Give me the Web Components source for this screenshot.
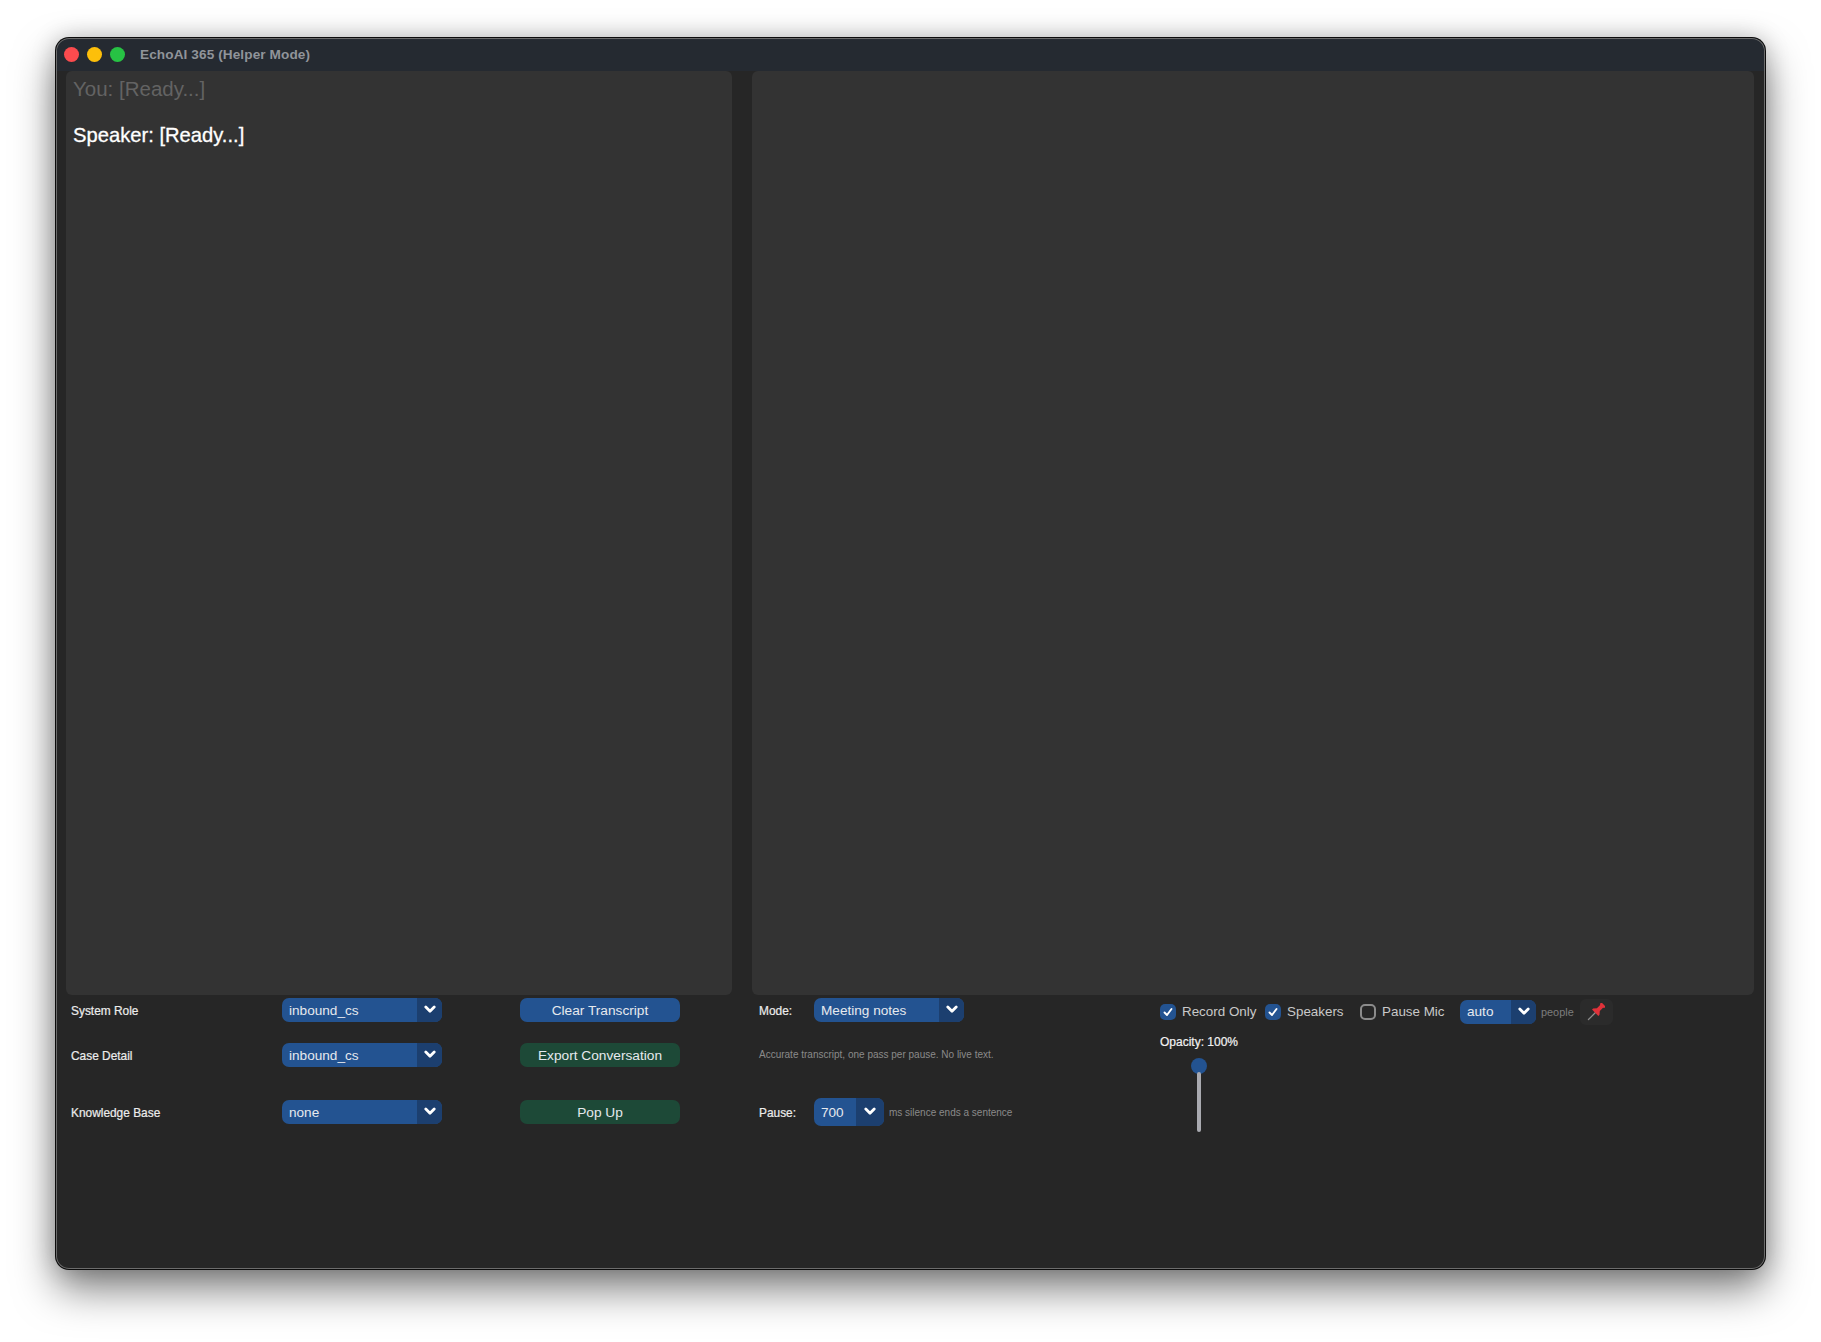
<!DOCTYPE html>
<html lang="en">
<head>
<meta charset="utf-8">
<title>EchoAI 365 (Helper Mode)</title>
<style>
    html, body { margin: 0; background: #fff; }
    body { padding: 38px 56px 73px; font-family: "Liberation Sans", Arial, sans-serif; }
</style>
</head>
<body>
<app-window>
    <title-bar slot="title">EchoAI 365 (Helper Mode)</title-bar>
    <text-panel slot="left" style="width:666px">
        <p class="you" style="margin:-1px 0 0;color:#636363;font-size:20.5px;line-height:24px">You: [Ready...]</p>
        <p class="speaker" style="margin:22px 0 0;color:#fff;font-size:20.2px;line-height:24px;-webkit-text-stroke:.3px #fff">Speaker: [Ready...]</p>
    </text-panel>
    <text-panel slot="right" style="flex:1"></text-panel>

    <control-grid slot="controls">
        <small-label>System Role</small-label>
        <drop-down value="inbound_cs" width="160"></drop-down>
        <action-button>Clear Transcript</action-button>
        <small-label>Mode:</small-label>
        <drop-down value="Meeting notes" width="150"></drop-down>

        <small-label>Case Detail</small-label>
        <drop-down value="inbound_cs" width="160"></drop-down>
        <action-button color="green">Export Conversation</action-button>
        <hint-text style="grid-column: span 2; margin-top: -1px">Accurate transcript, one pass per pause. No live text.</hint-text>

        <small-label>Knowledge Base</small-label>
        <drop-down value="none" width="160"></drop-down>
        <action-button color="green">Pop Up</action-button>
        <small-label>Pause:</small-label>
        <pause-field></pause-field>

        <side-controls></side-controls>
    </control-grid>
</app-window>

<script>
    class AppWindow extends HTMLElement {
        constructor() {
            super();
            this.attachShadow({ mode: 'open' });
            this.shadowRoot.innerHTML = `
                <style>
                    :host {
                        display: flex;
                        flex-direction: column;
                        position: relative;
                        height: 1231px;
                        background: #262626;
                        border-radius: 13px;
                        box-shadow: 0 0 0 1px #0c0c0c, 0 20px 42px rgba(0, 0, 0, .5), 0 0 24px rgba(0, 0, 0, .22);
                        overflow: hidden;
                    }
                    .edge {
                        position: absolute;
                        inset: 0;
                        border-radius: 13px;
                        box-shadow: inset 0 0 0 1px #6c6c6c;
                        pointer-events: none;
                    }
                    .panels {
                        display: flex;
                        gap: 20px;
                        height: 924px;
                        padding: 0 11px 0 10px;
                    }
                </style>
                <slot name="title"></slot>
                <div class="panels">
                    <slot name="left"></slot>
                    <slot name="right"></slot>
                </div>
                <slot name="controls"></slot>
                <div class="edge"></div>
            `;
        }
    }

    class TitleBar extends HTMLElement {
        constructor() {
            super();
            this.attachShadow({ mode: 'open' });
            this.shadowRoot.innerHTML = `
                <style>
                    :host {
                        display: flex;
                        align-items: center;
                        height: 33px;
                        padding-left: 8px;
                        background: #252a31;
                        box-sizing: border-box;
                    }
                    .dot { width: 15px; height: 15px; border-radius: 50%; margin-right: 8px; }
                    .red { background: #fb4b4e; }
                    .yellow { background: #fdbf0a; }
                    .green { background: #27c244; margin-right: 15px; }
                    .label {
                        font: bold 13.6px "Liberation Sans", Arial, sans-serif;
                        color: #90949a;
                        letter-spacing: .1px;
                    }
                </style>
                <span class="dot red"></span>
                <span class="dot yellow"></span>
                <span class="dot green"></span>
                <span class="label"><slot></slot></span>
            `;
        }
    }

    class TextPanel extends HTMLElement {
        constructor() {
            super();
            this.attachShadow({ mode: 'open' });
            this.shadowRoot.innerHTML = `
                <style>
                    :host {
                        display: block;
                        box-sizing: border-box;
                        height: 924px;
                        padding: 7px 7px;
                        background: #333333;
                        border-radius: 6px;
                    }
                </style>
                <slot></slot>
            `;
        }
    }

    class ControlGrid extends HTMLElement {
        constructor() {
            super();
            this.attachShadow({ mode: 'open' });
            this.shadowRoot.innerHTML = `
                <style>
                    :host {
                        display: grid;
                        grid-template-columns: 211px 238px 239px 55px 346px 1fr;
                        grid-template-rows: 45px 57px 24px;
                        grid-auto-flow: row;
                        padding: 3px 0 0 15px;
                        align-items: start;
                    }
                </style>
                <slot></slot>
            `;
        }
    }

    class SmallLabel extends HTMLElement {
        constructor() {
            super();
            this.attachShadow({ mode: 'open' });
            this.shadowRoot.innerHTML = `
                <style>
                    :host {
                        display: flex;
                        align-items: center;
                        height: 24px;
                        padding-top: 1px;
                        font-size: 11.9px;
                        color: #ececec;
                        -webkit-text-stroke: .2px #ececec;
                    }
                </style>
                <slot></slot>
            `;
        }
    }

    class HintText extends HTMLElement {
        constructor() {
            super();
            this.attachShadow({ mode: 'open' });
            this.shadowRoot.innerHTML = `
                <style>
                    :host {
                        display: flex;
                        align-items: center;
                        height: 24px;
                        font-size: 10px;
                        color: #8a8a8a;
                        white-space: nowrap;
                    }
                </style>
                <slot></slot>
            `;
        }
    }

    class DropDown extends HTMLElement {
        constructor() {
            super();
            this.attachShadow({ mode: 'open' });
        }

        connectedCallback() {
            const width = this.getAttribute('width') || 160;
            const height = this.getAttribute('height') || 24;
            const arrow = this.getAttribute('arrow') || 25;
            this.shadowRoot.innerHTML = `
                <style>
                    :host {
                        display: flex;
                        width: ${width}px;
                        height: ${height}px;
                        border-radius: 7px;
                        overflow: hidden;
                        color: #e6e9ee;
                        font-size: 13.6px;
                        background: #235391;
                    }
                    .value {
                        flex: 1;
                        display: flex;
                        align-items: center;
                        padding-left: 7px;
                        white-space: nowrap;
                    }
                    .arrow {
                        width: ${arrow}px;
                        display: flex;
                        align-items: center;
                        justify-content: center;
                        background: #1c3f6f;
                    }
                    svg { display: block; margin-top: -1px; }
                </style>
                <span class="value">${this.getAttribute('value')}</span>
                <span class="arrow">
                    <svg width="12" height="9" viewBox="0 0 12 9"><path d="M1.8 2 L6 6.2 L10.2 2" fill="none" stroke="#fff" stroke-width="2.8" stroke-linecap="round" stroke-linejoin="round"/></svg>
                </span>
            `;
        }
    }

    class ActionButton extends HTMLElement {
        constructor() {
            super();
            this.attachShadow({ mode: 'open' });
        }

        connectedCallback() {
            const bg = this.getAttribute('color') === 'green' ? '#1d4937' : '#235391';
            this.shadowRoot.innerHTML = `
                <style>
                    :host {
                        display: flex;
                        align-items: center;
                        justify-content: center;
                        width: 160px;
                        height: 24px;
                        border-radius: 7px;
                        background: ${bg};
                        color: #e6e9ee;
                        font-size: 13.7px;
                    }
                </style>
                <slot></slot>
            `;
        }
    }

    class PauseField extends HTMLElement {
        constructor() {
            super();
            this.attachShadow({ mode: 'open' });
            this.shadowRoot.innerHTML = `
                <style>
                    :host {
                        display: flex;
                        align-items: center;
                        gap: 5px;
                        height: 24px;
                    }
                </style>
                <drop-down value="700" width="70" height="28" arrow="28"></drop-down>
                <hint-text>ms silence ends a sentence</hint-text>
            `;
        }
    }

    class CheckOption extends HTMLElement {
        constructor() {
            super();
            this.attachShadow({ mode: 'open' });
        }

        connectedCallback() {
            const checked = this.hasAttribute('checked');
            this.shadowRoot.innerHTML = `
                <style>
                    :host {
                        display: flex;
                        align-items: center;
                        gap: 6px;
                        height: 26px;
                        font-size: 13.4px;
                        color: #c9c9c9;
                        white-space: nowrap;
                    }
                    .box {
                        box-sizing: border-box;
                        width: 16px;
                        height: 16px;
                        border-radius: 5px;
                        display: flex;
                        align-items: center;
                        justify-content: center;
                        background: #235391;
                    }
                    .box.off { background: none; border: 2.5px solid #8b8b8b; }
                </style>
                <span class="box ${checked ? '' : 'off'}">
                    ${checked ? '<svg width="12" height="12" viewBox="0 0 12 12"><path d="M2.5 6.5 L5 9 L9.5 3" fill="none" stroke="#fff" stroke-width="1.9" stroke-linecap="round" stroke-linejoin="round"/></svg>' : ''}
                </span>
                <slot></slot>
            `;
        }
    }

    class PinButton extends HTMLElement {
        constructor() {
            super();
            this.attachShadow({ mode: 'open' });
            this.shadowRoot.innerHTML = `
                <style>
                    :host {
                        display: flex;
                        align-items: center;
                        justify-content: center;
                        width: 33px;
                        height: 26px;
                        border-radius: 6px;
                        background: #2b2b2b;
                    }
                    svg { margin-left: -2px; margin-top: 1px; }
                </style>
                <svg width="18" height="18" viewBox="0 0 16 16">
                    <g transform="rotate(45 8 8)">
                        <path d="M8 8 L8 17.5" stroke="#8d8d8d" stroke-width="1.1" stroke-linecap="round"/>
                        <path d="M5.3 -1.5 H10.7 V0.2 L9.8 1 V5 L12 7.6 V9 H4 V7.6 L6.2 5 V1 L5.3 0.2 Z" fill="#e0323a"/>
                    </g>
                </svg>
            `;
        }
    }

    class OpacitySlider extends HTMLElement {
        constructor() {
            super();
            this.attachShadow({ mode: 'open' });
            this.shadowRoot.innerHTML = `
                <style>
                    :host {
                        display: flex;
                        flex-direction: column;
                        align-items: center;
                        width: 78px;
                        margin-top: 10px;
                        font-size: 12px;
                        color: #f2f2f2;
                        white-space: nowrap;
                    }
                    .caption { line-height: 14px; -webkit-text-stroke: .2px #f2f2f2; }
                    .knob {
                        width: 16px;
                        height: 16px;
                        border-radius: 50%;
                        background: #235391;
                        margin-top: 9px;
                    }
                    .track {
                        width: 4px;
                        height: 60px;
                        margin-top: -2px;
                        border-radius: 2px;
                        background: #a9aab0;
                    }
                </style>
                <span class="caption">Opacity: 100%</span>
                <span class="knob"></span>
                <span class="track"></span>
            `;
        }
    }

    class SideControls extends HTMLElement {
        constructor() {
            super();
            this.attachShadow({ mode: 'open' });
            this.shadowRoot.innerHTML = `
                <style>
                    :host {
                        display: block;
                        grid-column: 6;
                        grid-row: 1 / span 3;
                    }
                    .row {
                        display: grid;
                        grid-template-columns: 105px 95px 100px 81px 39px 33px;
                        align-items: center;
                        height: 27px;
                    }
                    .people { font-size: 10.9px; color: #7d7d7d; }
                </style>
                <div class="row">
                    <check-option checked>Record Only</check-option>
                    <check-option checked>Speakers</check-option>
                    <check-option>Pause Mic</check-option>
                    <drop-down value="auto" width="76"></drop-down>
                    <span class="people">people</span>
                    <pin-button></pin-button>
                </div>
                <opacity-slider></opacity-slider>
            `;
        }
    }

    customElements.define('app-window', AppWindow);
    customElements.define('title-bar', TitleBar);
    customElements.define('text-panel', TextPanel);
    customElements.define('control-grid', ControlGrid);
    customElements.define('small-label', SmallLabel);
    customElements.define('hint-text', HintText);
    customElements.define('drop-down', DropDown);
    customElements.define('action-button', ActionButton);
    customElements.define('pause-field', PauseField);
    customElements.define('check-option', CheckOption);
    customElements.define('pin-button', PinButton);
    customElements.define('opacity-slider', OpacitySlider);
    customElements.define('side-controls', SideControls);
</script>
</body>
</html>
